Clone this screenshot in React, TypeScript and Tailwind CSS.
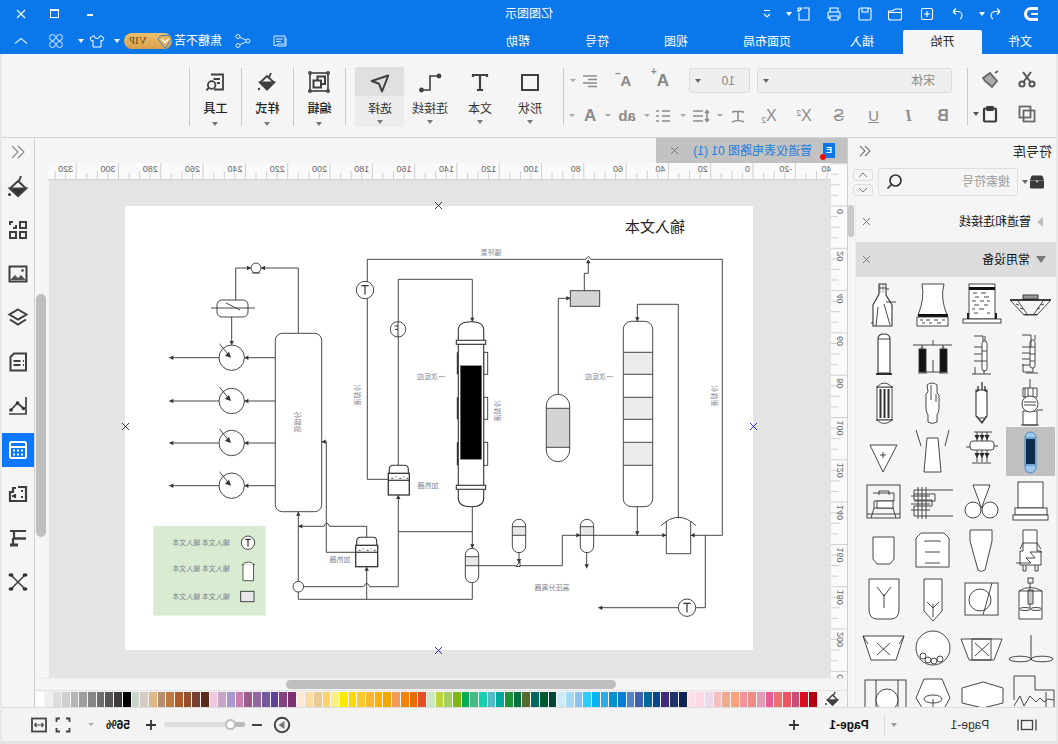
import React from "react";

type P = { w?: number; h?: number; className?: string; children?: React.ReactNode; stroke?: string; sw?: number };

// Icons are drawn as they look in the picture; the mirror group undoes the page mirror.
const Mi = ({ w = 24, h = 24, className, children, stroke = "#3f3f3f", sw = 2 }: P) => (
  <svg width={w} height={h} viewBox={`0 0 ${w} ${h}`} className={className} fill="none" stroke={stroke} strokeWidth={sw}>
    <g transform={`matrix(-1 0 0 1 ${w} 0)`}>{children}</g>
  </svg>
);

const Caret = ({ c = "border-t-[#777]" }: { c?: string }) => (
  <div className={`w-0 h-0 border-x-[3px] border-t-[4px] border-x-transparent ${c}`} />
);
const CaretW = () => <div className="w-0 h-0 border-x-[3px] border-t-[4px] border-x-transparent border-t-white" />;
const CaretG = () => <div className="w-0 h-0 border-x-[3px] border-t-[3px] border-x-transparent border-t-[#aaa]" />;

const W = ({ children, w = 16 }: { children: React.ReactNode; w?: number }) => (
  <Mi w={w} h={16} stroke="#fff" sw={1.1}>{children}</Mi>
);

function TitleBar() {
  return (
    <div className="flex items-center h-[27px] bg-[#0a78ea] text-white">
      <div className="w-[52px] flex justify-center">
        <Mi w={18} h={18} stroke="#fff" sw={3}>
          <path d="M15 3.5H8a5.5 5.5 0 0 0 0 11h7" />
          <path d="M8 9h7" strokeWidth={2} />
        </Mi>
      </div>
      <div className="w-[20px] flex justify-center">
        <W><path d="M12 5.5l-3-3M12 5.5l-3 3M12 5.5H7a4 4 0 0 0-4 4v0a4 4 0 0 0 2 3.5" /></W>
      </div>
      <div className="w-[8px] flex justify-center"><CaretW /></div>
      <div className="w-[30px] ml-[6px] flex justify-center">
        <W><path d="M4 5.5l3-3M4 5.5l3 3M4 5.5h5a4 4 0 0 1 4 4v0a4 4 0 0 1-2 3.5" /></W>
      </div>
      <div className="w-[30px] flex justify-center">
        <W><rect x="2.5" y="2.5" width="11" height="11" rx="1.5" /><path d="M8 5v6M5 8h6" /></W>
      </div>
      <div className="w-[30px] ml-[2px] flex justify-center">
        <W><path d="M1.5 5v7a2 2 0 0 0 2 2h9a2 2 0 0 0 2-2V3h-6l-3 2zM1.5 6.5h13" /></W>
      </div>
      <div className="w-[30px] flex justify-center">
        <W><rect x="2" y="2" width="12" height="12" rx="1.5" /><path d="M5 2v4h6V2" /></W>
      </div>
      <div className="w-[30px] ml-[1px] flex justify-center">
        <W><path d="M4 6V2h8v4M4 12H2V7a1 1 0 0 1 1-1h10a1 1 0 0 1 1 1v5h-2M4 10h8v4H4z" /></W>
      </div>
      <div className="w-[22px] ml-[4px] flex justify-center">
        <W><path d="M7 2h6v12H3V7M2 6l4-4M2 2v4M2 2h4" /></W>
      </div>
      <div className="w-[8px] flex justify-center"><CaretW /></div>
      <div className="w-[20px] ml-[8px] flex justify-center">
        <W><path d="M5 4.5h6M5 8l3 3 3-3" /></W>
      </div>
      <div className="w-[100px] ml-[178px] text-center text-[12px]">亿图图示</div>
      <div className="flex-1" />
      <div className="w-[36px] flex justify-center">
        <div className="w-[6px] h-[2px] bg-white mt-[3px]" />
      </div>
      <div className="w-[34px] flex justify-center">
        <div className="w-[9px] h-[9px] border border-white border-t-2" />
      </div>
      <div className="w-[34px] flex justify-center">
        <W><path d="M4 4l8 8M12 4l-8 8" /></W>
      </div>
      <div className="w-[4px]" />
    </div>
  );
}

const TABS: [string, string, boolean][] = [
  ["文件", "w-[76px]", false],
  ["开始", "w-[79px]", true],
  ["插入", "w-[82px]", false],
  ["页面布局", "w-[108px]", false],
  ["视图", "w-[74px]", false],
  ["符号", "w-[84px]", false],
  ["帮助", "w-[74px]", false],
];

function TabBar() {
  return (
    <div className="flex items-end h-[27px] bg-[#0a78ea]">
      {TABS.map(([t, w, a]) => (
        <div
          key={t}
          className={`${w} h-[24px] flex items-center justify-center text-[12px] ${a ? "bg-[#f5f5f5] text-[#222] rounded-t-[2px]" : "text-white"}`}
        >
          {t}
        </div>
      ))}
      <div className="flex-1" />
      <div className="h-[27px] flex items-center mr-[11px]">
        <div className="w-[20px] flex justify-center">
          <Mi w={16} h={16} stroke="#dcebff" sw={1}><path d="M2 3h11v8H6l-2 1.5H2zM4 6h7M4 8.5h5M14 5v8H5" /></Mi>
        </div>
        <div className="w-[20px] ml-[17px] flex justify-center">
          <Mi w={16} h={16} stroke="#dcebff" sw={1}><circle cx="3" cy="3.5" r="2" /><circle cx="3" cy="12.5" r="2" /><circle cx="13" cy="8" r="2" /><path d="M5 4.5l6 2.5M5 11.5l6-2.5" /></Mi>
        </div>
        <div className="w-[48px] ml-[11px] text-white text-[12px] text-center leading-none whitespace-nowrap">焦糖不苦</div>
        <div className="relative w-[48px] h-[16px] ml-[2px] rounded-full bg-gradient-to-b from-[#ecc06c] to-[#d99f4c] flex items-center justify-end pr-[5px]">
          <span className="text-[11px] text-[#6b4a1e] font-['Liberation_Serif'] leading-none">VIP</span>
          <div className="absolute left-[-2px] top-[-1px] w-[18px] h-[18px] flex items-center justify-center">
            <Mi w={18} h={18} stroke="#0a78ea" sw={0.8}><path d="M2 7l3-3.500h8L16 7l-7 9z" fill="#e7b45c" /><path d="M5.500 7l3.500 3.500L12.500 7" stroke="#fff" strokeWidth="1.400" /></Mi>
          </div>
        </div>
        <div className="w-[8px] ml-[3px] flex justify-center"><CaretW /></div>
        <div className="w-[20px] ml-[6px] flex justify-center">
          <Mi w={16} h={16} stroke="#fff" sw={1}><path d="M5 2.5L1 5l1.5 3L4 7.2V14h8V7.2l1.5.8L15 5l-4-2.5a3 3 0 0 1-6 0z" /></Mi>
        </div>
        <div className="w-[8px] ml-[2px] flex justify-center"><CaretW /></div>
        <div className="w-[20px] ml-[11px] flex justify-center">
          <Mi w={16} h={16} stroke="#dcebff" sw={1}><circle cx="4.5" cy="4.5" r="3" /><circle cx="11.5" cy="4.5" r="3" /><circle cx="4.5" cy="11.5" r="3" /><circle cx="11.5" cy="11.5" r="3" /></Mi>
        </div>
        <div className="w-[20px] ml-[15px] flex justify-center">
          <Mi w={16} h={16} stroke="#dcebff" sw={1.1}><path d="M2 10.5l6-5 6 5" /></Mi>
        </div>
      </div>
    </div>
  );
}

const Big = ({ icon, label, sel }: { icon: React.ReactNode; label: string; sel?: boolean }) => (
  <div className="w-[50px] h-[60px] mt-[13px] flex flex-col items-center rounded-[2px]">
    <div className={`w-[49px] h-[29px] flex items-center justify-center ${sel ? "bg-[#e0e0e0] rounded-t-[2px]" : ""}`}>{icon}</div>
    <div className={`w-[49px] h-[31px] flex flex-col items-center ${sel ? "bg-[#ececec] rounded-b-[2px]" : ""}`}>
      <div className="text-[12px] leading-[16px] mt-[5px] text-[#333]">{label}</div>
      <div className="mt-[3px]"><Caret /></div>
    </div>
  </div>
);

const Big2 = ({ icon, label }: { icon: React.ReactNode; label: string }) => (
  <div className="w-[52px] h-[58px] mt-[14px] flex flex-col items-center border-r border-[#c9c9c9]">
    <div className="h-[28px] flex items-center justify-center">{icon}</div>
    <div className="text-[12px] leading-[16px] mt-[5px] text-[#222] font-medium">{label}</div>
    <div className="mt-[5px]"><Caret /></div>
  </div>
);

const G = "#8c8c8c";
const GIc = ({ children, w = 18 }: { children: React.ReactNode; w?: number }) => (
  <Mi w={w} h={16} stroke={G} sw={1.6}>{children}</Mi>
);

function Ribbon() {
  return (
    <div className="flex h-[84px] bg-[#f5f5f5] border-b border-[#d4d4d4]">
      {/* clipboard */}
      <div className="w-[88px] flex">
        <div className="w-[54px] flex flex-col items-center pl-[4px] pt-[15px] gap-[15px]">
          <Mi w={20} h={20} stroke="#555" sw={2}>
            <circle cx="5" cy="15" r="2.6" /><circle cx="15" cy="15" r="2.6" /><path d="M6.5 13L14 3M13.5 13L6 3" />
          </Mi>
          <Mi w={20} h={20} stroke="#666" sw={1.8}>
            <rect x="2.5" y="2.5" width="11" height="11" /><rect x="6.5" y="6.5" width="11" height="11" />
          </Mi>
        </div>
        <div className="flex-1 flex flex-col items-start pl-[2px] pt-[15px] gap-[15px]">
          <Mi w={20} h={20} stroke="#666" sw={1.8}>
            <path d="M3 9l7-5 7 8-5 6-7-6z" fill="#aaa" /><path d="M15 4l3-2" />
          </Mi>
          <div className="flex items-center">
            <Mi w={20} h={20} stroke="#3a3a3a" sw={2.2}>
              <rect x="4" y="4.5" width="12" height="13" rx="1" /><path d="M7.5 3h5v3h-5z" fill="#3a3a3a" />
            </Mi>
            <div className="w-[1px]" />
            <Caret c="border-t-[#555]" />
          </div>
        </div>
      </div>
      <div className="w-px h-[57px] mt-[14px] bg-[#c9c9c9]" />
      {/* font */}
      <div className="w-[403px] flex flex-col pt-[14px]">
        <div className="flex items-center h-[25px]">
          <div className="ml-[15px] w-[195px] h-[25px] bg-[#efefef] border border-[#dcdcdc] rounded-[3px] flex items-center justify-between pl-[16px] pr-[5px]">
            <span className="text-[12px] text-[#8a8a8a]">宋体</span>
            <Caret c="border-t-[#666]" />
          </div>
          <div className="ml-[7px] w-[61px] h-[25px] bg-[#efefef] border border-[#dcdcdc] rounded-[3px] flex items-center justify-between pl-[14px] pr-[5px]">
            <span className="text-[12px] text-[#8a8a8a] font-['Liberation_Sans']">10</span>
            <Caret c="border-t-[#666]" />
          </div>
          <div className="w-[34px] ml-[12px] flex justify-center">
            <span className="text-[17px] font-bold text-[#888] font-['Liberation_Sans'] leading-none">A<sup className="text-[10px] align-[6px]">+</sup></span>
          </div>
          <div className="w-[34px] ml-[3px] flex justify-center">
            <span className="text-[15px] font-bold text-[#888] font-['Liberation_Sans'] leading-none">A<sup className="text-[10px] align-[4px]">−</sup></span>
          </div>
          <div className="w-[22px] ml-[5px] flex justify-center">
            <GIc><path d="M2 3h14M7 6.5h9M2 10h14M7 13.5h9" /></GIc>
          </div>
          <div className="ml-[3px]"><CaretG /></div>
        </div>
        <div className="flex items-center h-[25px] mt-[10px] text-[#8c8c8c] font-['Liberation_Sans']">
          <div className="w-[34px] ml-[7px] text-center text-[16px] font-bold leading-none">B</div>
          <div className="w-[35px] text-center text-[16px] font-bold italic font-['Liberation_Serif'] leading-none">I</div>
          <div className="w-[35px] text-center text-[15px] underline leading-none">U</div>
          <div className="w-[34px] text-center text-[16px] line-through leading-none">S</div>
          <div className="w-[36px] text-center text-[16px] leading-none">X<sup className="text-[9px]">2</sup></div>
          <div className="w-[34px] text-center text-[16px] leading-none">X<sub className="text-[9px]">2</sub></div>
          <div className="w-[28px] flex justify-center"><GIc><path d="M4 3.5h10M9 3.5v8M4 3v2M14 3v2M3 14q6-3 12 0" /></GIc></div>
          <div className="w-[8px] flex justify-center"><CaretG /></div>
          <div className="w-[30px] flex justify-center"><GIc w={20}><path d="M2 3h10M2 8h10M2 13h10M16 3v10M14 5l2-2.5L18 5M14 11l2 2.5 2-2.5" /></GIc></div>
          <div className="w-[6px] flex justify-center"><CaretG /></div>
          <div className="w-[28px] ml-[3px] flex justify-center"><GIc><path d="M2 3h3M8 3h8M2 8h3M8 8h8M2 13h3M8 13h8" /></GIc></div>
          <div className="w-[4px] flex justify-center"><CaretG /></div>
          <div className="w-[32px] ml-[2px] text-center text-[15px] font-bold leading-none">ab</div>
          <div className="w-[6px] flex justify-center"><CaretG /></div>
          <div className="w-[30px] text-center text-[17px] font-bold leading-none">A</div>
          <div className="w-[6px] flex justify-center"><CaretG /></div>
        </div>
      </div>
      <div className="w-px h-[57px] mt-[14px] bg-[#c9c9c9]" />
      <div className="w-[8px]" />
      <Big label="形状" icon={<Mi><rect x="4" y="5" width="16" height="15" /></Mi>} />
      <Big label="文本" icon={<Mi w={24} h={24} sw={2.2}><path d="M5 7V5h14v2M12 5v15M9 20h6" /></Mi>} />
      <Big label="连接线" icon={<Mi sw={1.6}><circle cx="3.5" cy="20" r="1.6" fill="#3f3f3f" /><circle cx="21" cy="6" r="1.6" fill="#3f3f3f" /><path d="M5 20h7V6h7" /></Mi>} />
      <Big sel label="选择" icon={<Mi sw={2}><path d="M3.7 11L20.3 5.5 14 21.5 11 13.7z" strokeLinejoin="round" /></Mi>} />
      <div className="w-[9px]" />
      <div className="w-px h-[57px] mt-[14px] bg-[#c9c9c9]" />
      <Big2 label="编辑" icon={
        <Mi sw={1.6}>
          <rect x="3" y="3" width="18" height="18" /><circle cx="3" cy="3" r="1.2" fill="#f5f5f5" /><circle cx="21" cy="3" r="1.2" fill="#f5f5f5" /><circle cx="3" cy="21" r="1.2" fill="#f5f5f5" /><circle cx="21" cy="21" r="1.2" fill="#f5f5f5" />
          <path d="M10.5 10V6.5h7.5V14h-4" strokeWidth="2" /><rect x="6.5" y="10.5" width="7.5" height="7" strokeWidth="2" />
        </Mi>} />
      <Big2 label="样式" icon={
        <Mi sw={1.8}>
          <path d="M12 6l7 6.5-7 7-7-7z" /><path d="M5 12.5h14l-7 7z" fill="#3f3f3f" /><path d="M14 7.5L16 3" /><circle cx="4" cy="19" r="1.2" fill="#3f3f3f" stroke="none" />
        </Mi>} />
      <Big2 label="工具" icon={
        <Mi sw={1.8}>
          <path d="M8 4.5h12v15H11" /><path d="M10.5 9h6.5M14 13h3" /><circle cx="8.7" cy="15" r="3.8" /><path d="M5.7 18l-2.4 2.4" />
        </Mi>} />
    </div>
  );
}

const PAL = [
  "#ffffff","#eeeeee","#dddddd","#cfcfcf","#b5b5b5","#9e9e9e","#868686","#6e6e6e","#555555","#3e3a3a","#000000",
  "#c9d4cb","#d5ccc6","#dfb888","#b88f6e","#be7a42","#ad5b2b","#954f2b","#773f30","#5c2c1b",
  "#efc8dd","#c9a5c7","#a998cf","#cb7fb0","#9c5b8d","#91679e","#74589f","#5f4195","#83417f","#7f2f74",
  "#fde9d3","#fbdca8","#ecca97","#fdd26b","#fdf083","#fee900","#fdd900","#fdc92d","#fdb72f","#fdb100","#f1a704","#f49c55","#f38300","#ed6b06","#e84e24",
  "#cfe6c5","#bdd53e","#a5ce63","#7eb80e","#06ad52","#45b97f","#19cfae","#54bac6","#00aa9e","#1f9139","#02723f","#546a2f",
  "#01695f","#005c30","#004435","#cdeaf6","#a4d9f3","#8bc3ec","#2fcbfd","#07b3f0","#2eabe6","#0091d0","#0a7cd1","#5484c4","#3e62ae","#04689f","#04478d","#412a7d","#21356a","#0f2454",
  "#fde0e7","#fdd8e7","#ecd8e9","#f5c0bd","#eeab94","#fca17a","#f3929a","#ef8d85","#e39bb7","#e95d95","#ee7070","#ee5563","#c74f77","#db0d20","#b30012",
];

function HRuler() {
  const ks = Array.from({ length: 19 }, (_, i) => i - 2);
  return (
    <svg width={783} height={17} className="block bg-[#fafafa] border-b border-[#d4d4d4] box-border">
      {ks.map((k) => {
        const x = 78 + 42.3 * k;
        return (
          <g key={k} stroke="#cfcfcf">
            <line x1={x} x2={x} y1={0} y2={16} />
            <line x1={x + 10.6} x2={x + 10.6} y1={10} y2={16} />
            <line x1={x + 21.1} x2={x + 21.1} y1={8} y2={16} />
            <line x1={x + 31.7} x2={x + 31.7} y1={10} y2={16} />
            <text x={x + 3} y={9} fontSize={9} fill="#666" stroke="none" fontFamily="Liberation Sans">{20 * k}</text>
          </g>
        );
      })}
    </svg>
  );
}

function VRuler() {
  const ks = Array.from({ length: 12 }, (_, i) => i);
  return (
    <svg width={16} height={515} className="block bg-[#fafafa] shrink-0">
      {[-1, ...ks].map((k) => {
        const y = 43 + 42.3 * k;
        return (
          <g key={k} stroke="#cfcfcf">
            <line x1={0} x2={16} y1={y} y2={y} />
            <line x1={9} x2={16} y1={y + 10.6} y2={y + 10.6} />
            <line x1={7} x2={16} y1={y + 21.1} y2={y + 21.1} />
            <line x1={9} x2={16} y1={y + 31.7} y2={y + 31.7} />
            {k >= 0 && (
              <text x={4} y={y + 3} fontSize={9} fill="#666" stroke="none" fontFamily="Liberation Sans" transform={`rotate(90 4 ${y + 3})`}>
                {k === 11 ? 0 : 20 * k}
              </text>
            )}
          </g>
        );
      })}
    </svg>
  );
}

const Ar = ({ x, y, d }: { x: number; y: number; d: "l" | "r" | "u" | "d" }) => {
  const s = 2.2, t = 4;
  const p =
    d === "l" ? `${x},${y} ${x + t},${y - s} ${x + t},${y + s}` :
    d === "r" ? `${x},${y} ${x - t},${y - s} ${x - t},${y + s}` :
    d === "u" ? `${x},${y} ${x - s},${y + t} ${x + s},${y + t}` :
    `${x},${y} ${x - s},${y - t} ${x + s},${y - t}`;
  return <polygon points={p} fill="#333" stroke="none" />;
};

const Lb = ({ x, y, t, v, s = 7 }: { x: number; y: number; t: string; v?: boolean; s?: number }) => (
  <text
    x={878 - x}
    y={y}
    fontSize={s}
    fill="#7d8290"
    textAnchor="middle"
    dominantBaseline="middle"
    fontFamily="Noto Sans CJK SC"
    transform={v ? `rotate(90 ${878 - x} ${y})` : undefined}
  >
    {t}
  </text>
);

const Tank = ({ x, y, w, h }: { x: number; y: number; w: number; h: number }) => (
  <g>
    <path d={`M${x + 1} ${y + 8}V${y + 4}Q${x + 1} ${y} ${x + 5} ${y}H${x + w - 5}Q${x + w - 1} ${y} ${x + w - 1} ${y + 4}V${y + 8}`} fill="#fff" strokeWidth={1.1} />
    <rect x={x} y={y + 8} width={w} height={h - 8} fill="#fff" strokeWidth={1.3} />
    <line x1={x} x2={x + w} y1={y + 15} y2={y + 15} strokeWidth={1.2} />
    <path d={`M${x + 3} ${y + 13}h2M${x + 7} ${y + 11.5}h1M${x + 11} ${y + 13}h2M${x + 15} ${y + 11.5}h1M${x + 18} ${y + 13}h2`} />
  </g>
);

const Ves = ({ x, y, w, h, a, b }: { x: number; y: number; w: number; h: number; a: number; b: number }) => (
  <g>
    <rect x={x} y={a} width={w} height={b - a} fill="#e8e8e8" stroke="none" />
    <rect x={x} y={y} width={w} height={h} rx={w / 2} />
    <path d={`M${x} ${a}h${w}M${x} ${b}h${w}`} />
  </g>
);

const TC = ({ x, y, r = 8.7 }: { x: number; y: number; r?: number }) => (
  <g>
    <circle cx={x} cy={y} r={r} fill="#fff" />
    <path d={`M${x - r * 0.42} ${y - r * 0.5}h${r * 0.84}M${x} ${y - r * 0.5}v${r * 1.05}`} strokeWidth={1.2} />
  </g>
);

function Diagram() {
  const cy = [357.7, 401, 443, 485.7];
  return (
    <svg viewBox="125 206 628 444" width={628} height={444} className="block">
      <g transform="matrix(-1 0 0 1 878 0)" fill="none" stroke="#333" strokeWidth={0.9}>
        {/* top left */}
        <path d="M235.7 300V268H251M261 268H298.3V333.3" />
        <circle cx={256} cy={268} r={5} fill="#fff" />
        <path d="M252 273h8" />
        <Ar x={251} y={268} d="r" /><Ar x={261} y={268} d="l" />
        <rect x={217} y={300} width={31} height={17} rx={5} fill="#fff" />
        <path d="M211 308h44M226 303l14 7M231.7 317V345" />
        <Ar x={231.7} y={345} d="d" />
        {cy.map((y) => (
          <g key={y}>
            <circle cx={231.7} cy={y} r={12.7} fill="#fff" />
            <path d={`M169.3 ${y}H219M244.4 ${y}H275.3M219.5 ${y - 14}L230 ${y - 1}`} />
            <Ar x={169.3} y={y} d="l" /><Ar x={244.4} y={y} d="l" />
            <polygon points={`${231},${y} ${225},${y - 2} ${229},${y - 6}`} fill="#333" stroke="none" />
          </g>
        ))}
        <rect x={275.3} y={333.3} width={46.4} height={178.4} rx={7} fill="#fff" />
        {/* left lower */}
        <path d="M298.3 511.7V581.4M321.7 441.7H326.3V552.3H355.7" />
        <Ar x={321.7} y={441.7} d="l" />
        <Ar x={298.3} y={511.7} d="u" />
        <path d="M366.7 537.3V526.3H329.5Q326.7 520 324 526.3H298.3" />
        <Ar x={298.3} y={526.3} d="l" />
        <Tank x={355.7} y={537.3} w={22} h={29.4} />
        <circle cx={298.3} cy={586.7} r={5.3} fill="#fff" />
        <path d="M303.6 586.7H363.7Q366.7 580 369.7 586.7H398.3V495" />
        <Ar x={398.3} y={495} d="u" />
        <path d="M298.3 592V599.3H472.3V582.7M366.7 599.3V566.7" />
        <Ar x={366.7} y={566.7} d="u" />
        <Tank x={388.3} y={465.3} w={21} h={29.7} />
        <path d="M367.3 479.3V259.3H586Q588.3 254 590.6 259.3H722.3V535.3H690.7" />
        <Ar x={690.7} y={535.3} d="l" />
        <path d="M367.3 479.3H388.3M398.3 465.3V279.3H472.3V321.7" />
        <Ar x={472.3} y={321.7} d="d" />
        <TC x={365} y={290} />
        <circle cx={398} cy={329.3} r={7.7} fill="#fff" />
        <path d="M398 322v15M395 329.3h3M394.5 326h3.5" strokeWidth={1} />
        {/* reactor */}
        <path d="M458.3 340V330Q458.3 321.7 471 321.7Q483.7 321.7 483.7 330V340M458.3 489V498Q458.3 506.7 471 506.7Q483.7 506.7 483.7 498V489" fill="#fff" strokeWidth={1.1} />
        <rect x={483.7} y={352.3} width={4} height={22} fill="#fff" />
        <rect x={483.7} y={397.3} width={4} height={22} fill="#fff" />
        <rect x={483.7} y={442.3} width={4} height={23} fill="#fff" />
        <path d="M457.5 352.3v22M457.5 397.3v22M457.5 442.3v23" strokeWidth={1.4} />
        <rect x={458.3} y={344} width={25.4} height={142} fill="#fff" strokeWidth={1.1} />
        <rect x={456.3} y={340.3} width={29.4} height={4} fill="#fff" strokeWidth={1.1} />
        <rect x={456.3} y={485.3} width={29.4} height={4} fill="#fff" strokeWidth={1.1} />
        <rect x={460.3} y={365.7} width={21.4} height={93.6} fill="#000" stroke="#777" strokeWidth={0.5} />
        <path d="M472.3 506.7V548.3M398.3 531.7H472.3" />
        <Ar x={472.3} y={548.3} d="d" />
        <Ves x={465.3} y={548.3} w={13.4} h={34.4} a={556.7} b={565.7} />
        <path d="M478.7 565.7H562.3V535.3H580.3" />
        <Ar x={580.3} y={535.3} d="r" />
        <Ves x={512.3} y={519.3} w={13.4} h={33.4} a={526.7} b={535.3} />
        <path d="M519 552.7V563" />
        <Ar x={519} y={563} d="d" />
        <polygon points="516,566.5 520,561.5 520,566.5" fill="#fff" />
        <Ves x={580.3} y={519.3} w={13.4} h={33.4} a={526.7} b={535.3} />
        <path d="M586.7 552.7V568.3" />
        <Ar x={586.7} y={568.3} d="d" />
        {/* capsule */}
        <rect x={546.3} y={408.3} width={23.4} height={39} fill="#d4d4d4" stroke="none" />
        <rect x={546.3} y={394.3} width={23.4} height={67.4} rx={11.7} />
        <path d="M546.3 408.3h23.4M546.3 447.3h23.4" />
        <path d="M558.3 394.3V298.3H570.3" />
        <Ar x={570.3} y={298.3} d="r" />
        <rect x={570.3} y={290.7} width={29.4} height={15.6} fill="#d4d4d4" />
        <path d="M584.3 290.7V273.3H588.3V260" />
        <Ar x={588.3} y={259.3} d="u" />
        {/* right column */}
        <rect x={623.3} y={352.3} width={29.4} height={22} fill="#ebebeb" stroke="none" />
        <rect x={623.3} y={397.3} width={29.4} height={22} fill="#ebebeb" stroke="none" />
        <rect x={623.3} y={442.3} width={29.4} height={23} fill="#ebebeb" stroke="none" />
        <rect x={623.3} y={321.3} width={29.4} height={185.4} rx={8} />
        <path d="M623.3 352.3h29.4M623.3 374.3h29.4M623.3 397.3h29.4M623.3 419.3h29.4M623.3 442.3h29.4M623.3 465.3h29.4" />
        <path d="M637.3 321.3V304.3H678.3V518.3" />
        <Ar x={637.3} y={321.3} d="d" />
        <path d="M593.7 535.3H666.3M637.3 506.7V535.3" />
        <Ar x={637.3} y={535.3} d="d" /><Ar x={666.3} y={535.3} d="r" />
        <path d="M661 525.7Q678.5 509 696 525.7" />
        <path d="M666.3 521V553.7H690.7V521" />
        <path d="M705.3 535.3V607.7H695.7M678.3 607.7H598.3" />
        <Ar x={598.3} y={607.7} d="l" />
        <TC x={687} y={607.7} />
        {/* legend */}
        <rect x={153.3} y={526} width={112.4} height={89.7} fill="#d9ecd2" stroke="none" />
        <TC x={248} y={542.7} r={6.7} />
        <path d="M241.7 565Q248.3 559 255 565M243 564V580.7H253.5V564" strokeWidth={0.8} fill="#fff" />
        <rect x={240.7} y={591.3} width={13.3} height={10.4} fill="#e8e8e8" />
      </g>
      <Lb x={298} y={422} t="分馏塔" v />
      <Lb x={358} y={395} t="冷却液" v />
      <Lb x={498} y={411} t="冷却液" v />
      <Lb x={715} y={396} t="冷却液" v />
      <Lb x={431} y={377} t="一次反应" />
      <Lb x={599} y={377} t="一次反应" />
      <Lb x={428} y={485.7} t="加热器" />
      <Lb x={340} y={560} t="加热器" />
      <Lb x={491} y={253} t="循环泵" />
      <Lb x={552} y={587.7} t="高压分离器" />
      <Lb x={201} y={542.7} t="输入文本 输入文本" />
      <Lb x={201} y={569} t="输入文本 输入文本" />
      <Lb x={201} y={596.7} t="输入文本 输入文本" />
      <text x={878 - 655} y={232} fontSize={15} fill="#222" textAnchor="middle" fontFamily="Noto Sans CJK SC">输入文本</text>
    </svg>
  );
}

const Handle = ({ c, cls }: { c: string; cls: string }) => (
  <div className={`absolute w-[9px] h-[9px] ${cls}`}>
    <svg width={9} height={9} className="block" stroke={c} strokeWidth={0.9}><path d="M1 1l7 7M8 1L1 8" /></svg>
  </div>
);

const Sym = ({ children, sel }: { children: React.ReactNode; sel?: boolean }) => (
  <div className={`w-[49px] h-[49px] ${sel ? "bg-[#c0c0c0]" : ""}`}>
    <svg width={49} height={49} viewBox="0 0 49 49" className="block">
      <g transform="matrix(-1 0 0 1 49 0)" fill="none" stroke="#333" strokeWidth={0.9}>{children}</g>
    </svg>
  </div>
);

const SYMS: React.ReactNode[] = [
  // row 0
  <>
    <rect x="17" y="15" width="15" height="4" fill="#999" />
    <path d="M4 20H45" strokeWidth="1.6" stroke="#000" />
    <path d="M5 21L18 35H31L44 21M12 21L21 34M37 21L28 34M17 34.500H32" />
    <path d="M10 24l3 1M14 28l3 1M35 25l3-1M31 29l3-1" />
  </>,
  <>
    <rect x="12" y="4" width="26" height="35" fill="#fff" />
    <rect x="12" y="7" width="26" height="3" fill="#111" stroke="none" />
    <path d="M16 13h4M24 13h5M18 17h4M27 17h5M15 21h4M23 21h4M30 21h3M17 25h5M27 25h4M15 29h3M22 29h5M30 33h3M17 33h4" />
    <rect x="6" y="39" width="38" height="4" fill="#fff" />
    <rect x="10" y="33" width="2" height="6" fill="#222" stroke="none" /><rect x="38" y="33" width="2" height="6" fill="#222" stroke="none" />
  </>,
  <>
    <path d="M14 4H36Q32 18 39 35H10Q17 18 14 4Z" fill="#fff" />
    <rect x="10" y="34" width="30" height="3" fill="#111" stroke="none" />
    <rect x="9" y="37" width="31" height="9" fill="#fff" />
    <path d="M12 40h3M18 40h4M26 40h4M34 40h3M14 43h3M21 43h3M29 43h4" />
  </>,
  <>
    <path d="M20 4V14L14 25V46H33V25L27 15V4Z" fill="#fff" strokeWidth="1.100" />
    <path d="M20 8H27M27 9h3M27 22h10M19 27L17 46M25 24L31 45M14 43h-2" />
    <path d="M21 4V13M24 4V13" strokeWidth=".5" />
  </>,
  // row 1
  <>
    <rect x="24" y="11" width="5" height="28" rx="2.500" fill="#fff" />
    <path d="M24 18h5M24 25h5M24 32h5M27 39V43H17V35M29 6V11M16 6H25V18M16 18H24M16 24H24M16 30H24M16 36H24M20 44h12" />
  </>,
  <>
    <rect x="25" y="12" width="5" height="30" rx="2.500" fill="#fff" />
    <path d="M25 22h5M25 32h5M28 7V12M17 7H26V12M17 18H25M17 25H25M17 32H25M15 45H34M18 38V45M27 41v4" />
  </>,
  <>
    <rect x="11" y="20" width="7" height="23" fill="#111" /><rect x="32" y="20" width="7" height="23" fill="#111" />
    <path d="M5 16H44M14 16v4M35 16v4M14 43H36M25 11v5M25 31v12M10 44h9M31 44h9" />
    <circle cx="14" cy="19" r="1" fill="#fff" /><circle cx="35" cy="19" r="1" fill="#fff" />
  </>,
  <>
    <path d="M19 44V10Q19 5 25 5Q31 5 31 10V44Z" fill="#fff" strokeWidth="1.100" />
    <path d="M19 10H31" />
    <rect x="17" y="44" width="16" height="2" fill="#333" stroke="none" />
  </>,
  // row 2
  <>
    <path d="M24 1V10M17 10H31V19H17ZM17 33H31V47H17ZM15 47H33" fill="#fff" />
    <path d="M19 10V19M22 10V19M27 10V19" />
    <circle cx="24" cy="26" r="8" fill="#fff" /><path d="M18 24h12M18 27h12M31 32h6" />
  </>,
  <>
    <path d="M19 12H30V38L25 45L19 38Z" fill="#fff" strokeWidth="1.100" />
    <path d="M25 4V12M21 8V13M28 8V13M19 14L22 12M30 14L27 12" strokeWidth="1.300" />
    <path d="M20 38L25 44L29 38M22 40h5" />
  </>,
  <>
    <path d="M19 7Q24 3 29 7V15L31 17V30Q31 34 29 37V44Q24 47 20 44V37Q18 34 18 30V16L20 14Z" fill="#fff" />
    <path d="M23 7V22M28 16V24" />
  </>,
  <>
    <rect x="18" y="9" width="15" height="33" fill="#fff" />
    <path d="M18 9Q25 1 33 9M18 42Q25 49 33 42M17 9H34M17 42H34" fill="#fff" />
    <rect x="20.500" y="11" width="2" height="29" fill="#333" stroke="none" /><rect x="24.500" y="11" width="2" height="29" fill="#333" stroke="none" /><rect x="28.500" y="11" width="2" height="29" fill="#333" stroke="none" />
  </>,
  // row 3
  <>
    <rect x="19" y="5" width="11" height="41" rx="5.500" fill="#9cc9ec" stroke="#3f7fb8" />
    <rect x="20" y="12" width="9" height="25" fill="#0c2d4d" stroke="none" />
    <path d="M19 11H30M19 38H30" stroke="#3f7fb8" />
  </>,
  <>
    <rect x="13" y="14" width="24" height="9" rx="3" fill="#fff" />
    <path d="M9 20H13M37 19H41M17 5H35M15 36H34M20 5V14M25 5V14M30 5V14M20 23V35M25 23V35M30 23V35" />
    <path d="M18 8l2 4 2-4M23 8l2 4 2-4M28 8l2 4 2-4M18 26l2 4 2-4M23 26l2 4 2-4M28 26l2 4 2-4" fill="#222" strokeWidth="1.200" />
  </>,
  <>
    <path d="M19 11H30L33 45H16Z" fill="#fff" />
    <path d="M8 3L13 19M41 3L37 19" />
  </>,
  <>
    <path d="M11 18H38L24 45Z" fill="#fff" />
    <path d="M24 25v6M21 28h6" />
  </>,
  // row 4
  <>
    <rect x="12" y="6" width="25" height="26" fill="#fff" />
    <rect x="9" y="32" width="32" height="7" fill="#fff" />
    <rect x="7" y="39" width="35" height="5" fill="#fff" />
  </>,
  <>
    <path d="M16 9H33L24.500 32Z" fill="#fff" />
    <circle cx="16" cy="34" r="8" fill="#fff" /><circle cx="33" cy="34" r="8" fill="#fff" />
  </>,
  <>
    <path d="M45 14H6V24H24V30H6V40H45" />
    <path d="M6 18H27V25H6M3 20H22M3 28H22M3 34H22M10 11V43M14 11V43M18 11V43" />
  </>,
  <>
    <rect x="8" y="9" width="33" height="33" />
    <path d="M14 17H35V25H15V32H34M20 19V15H30V19M12 42L15 32M37 42L34 32" />
    <rect x="18" y="25" width="16" height="7" fill="#fff" />
    <path d="M8 38H41" />
  </>,
  // row 5
  <>
    <path d="M17 26V5H31V26H35V40H14V26Z" fill="#fff" />
    <path d="M17 18H31M17 18L14 24M31 18L35 24M10 38H25L20 33H29L24 27H36M17 40V46H20V40M29 40V46H32V40" />
  </>,
  <>
    <path d="M13 5H35V16L28 45Q24 48 21 45L13 16Z" fill="#fff" />
  </>,
  <>
    <path d="M13 8H36L41 13V42H8V13Z" fill="#fff" />
    <path d="M17 16L32 16M17 16v1M32 16v1M17 27H32M17 38H32" />
  </>,
  <>
    <path d="M14 12H35V34L31 39H18L14 34Z" fill="#fff" />
  </>,
  // row 6
  <>
    <rect x="22" y="4" width="5" height="5" />
    <path d="M13 17Q24 10 36 17V45H13ZM24 9V35" fill="#fff" />
    <path d="M13 17H36M22 16h5V30h-5z" fill="#ccc" />
    <ellipse cx="19" cy="35" rx="5.500" ry="1.500" fill="#fff" /><ellipse cx="30" cy="35" rx="5.500" ry="1.500" fill="#fff" />
  </>,
  <>
    <rect x="8" y="9" width="33" height="32" fill="#fff" />
    <circle cx="23" cy="26" r="11" /><path d="M35 9L26 41" />
  </>,
  <>
    <path d="M16 5H34V37L25 47L16 37Z" fill="#fff" />
    <path d="M25 43V30M19 28L25 34L31 28" />
  </>,
  <>
    <path d="M10 5H40V35Q40 45 32 45H18Q10 45 10 35Z" fill="#fff" />
    <path d="M25 34V20M18 13L25 22L32 13" />
  </>,
  // row 7
  <>
    <path d="M25 12V37" />
    <ellipse cx="14" cy="36" rx="11" ry="2.800" /><ellipse cx="36" cy="36" rx="11" ry="2.800" />
  </>,
  <>
    <path d="M4 16H45L37 37H12Z" fill="#fff" />
    <rect x="15" y="16" width="19" height="21" />
    <path d="M18 20L32 33M32 20L18 33" />
  </>,
  <>
    <circle cx="25" cy="25" r="17" fill="#fff" />
    <circle cx="15" cy="33" r="3" fill="#fff" /><circle cx="20" cy="37" r="3" fill="#fff" /><circle cx="26" cy="38" r="3" fill="#fff" /><circle cx="32" cy="36" r="3" fill="#fff" />
  </>,
  <>
    <path d="M4 13H45L37 37H12Z" fill="#fff" />
    <path d="M4 13L9 21M45 13L40 21M18 20L31 32M31 20L18 32" />
  </>,
  // row 8
  <>
    <path d="M8 28V4H29V18H48V42H8M8 34L14 24L18 34L24 24L30 30L34 26L38 30L42 27L48 28" />
    <path d="M40 20V42" />
  </>,
  <>
    <path d="M5 16L26 10L46 16V31L26 36L5 31Z" fill="#fff" />
  </>,
  <>
    <path d="M16 7H34L42 26L33 42H18L8 26Z" fill="#fff" />
    <ellipse cx="25" cy="27" rx="9" ry="4" /><path d="M25 27V42" />
  </>,
  <>
    <rect x="6" y="8" width="41" height="40" />
    <path d="M17 8V48M39 8V48" /><circle cx="28" cy="28" r="11" fill="#fff" />
  </>,
];

function Library() {
  return (
    <div className="w-[208px] shrink-0 flex flex-col overflow-hidden bg-[#f5f5f5]">
      <div className="h-[26px] flex items-center justify-between pl-[4px] pr-[10px] shrink-0">
        <span className="text-[13px] text-[#222] leading-none">符号库</span>
        <Mi w={14} h={14} stroke="#777" sw={1.1}><path d="M2 2l5 5-5 5M7 2l5 5-5 5" /></Mi>
      </div>
      <div className="h-[28px] mt-[4px] flex items-center shrink-0">
        <div className="w-[36px] flex items-center justify-end pr-[2px] gap-[1px]">
          <Mi w={16} h={16} stroke="#3a3a3a" sw={1}>
            <path d="M3 2h10l1.500 4h-13z" fill="#3a3a3a" /><path d="M1.500 7h5l1 2h1l1-2h5v7h-13z" fill="#3a3a3a" />
          </Mi>
          <Caret c="border-t-[#666]" />
        </div>
        <div className="w-[140px] h-[28px] ml-[2px] border border-[#dedede] rounded-[3px] flex items-center justify-between pl-[7px] pr-[6px]">
          <span className="text-[12px] text-[#9a9a9a] leading-none">搜索符号</span>
          <Mi w={18} h={18} stroke="#333" sw={1.700}>
            <circle cx="10.500" cy="7.500" r="5.500" /><path d="M6.500 11.500L2.500 15.500" />
          </Mi>
        </div>
        <div className="w-[20px] ml-[5px] flex flex-col gap-[3px]">
          <div className="h-[12px] border border-[#dedede] rounded-[3px] flex items-center justify-center">
            <svg width="10" height="6" fill="none" stroke="#777"><path d="M1 5l4-4 4 4" /></svg>
          </div>
          <div className="h-[12px] border border-[#dedede] rounded-[3px] flex items-center justify-center">
            <svg width="10" height="6" fill="none" stroke="#777"><path d="M1 1l4 4 4-4" /></svg>
          </div>
        </div>
      </div>
      <div className="flex flex-1 mt-[5px] min-h-0">
        <div className="w-[200px] flex flex-col overflow-hidden">
          <div className="h-[41px] shrink-0 flex items-center pl-[13px] pr-[6px] justify-between">
            <div className="flex items-center gap-[6px]">
              <div className="w-0 h-0 border-y-[5px] border-l-[6px] border-y-transparent border-l-[#bdbdbd]" />
              <span className="text-[12px] text-[#111] leading-none">管道和连接线</span>
            </div>
            <svg width="9" height="9" stroke="#777"><path d="M1 1l7 7M8 1L1 8" /></svg>
          </div>
          <div className="h-[35px] shrink-0 bg-[#dddddd] flex items-center pl-[10px] pr-[6px] justify-between">
            <div className="flex items-center gap-[6px]">
              <div className="w-0 h-0 border-x-[5px] border-t-[7px] border-x-transparent border-t-[#777]" />
              <span className="text-[12px] text-[#111] leading-none">常用设备</span>
            </div>
            <svg width="9" height="9" stroke="#777"><path d="M1 1l7 7M8 1L1 8" /></svg>
          </div>
          <div className="grid grid-cols-[repeat(4,49px)] auto-rows-[49px] pl-[1px] pt-[3px]">
            {SYMS.map((s, i) => (
              <Sym key={i} sel={i === 12}>{s}</Sym>
            ))}
          </div>
        </div>
        <div className="w-[8px] flex justify-center pt-[4px] border-l border-[#ececec]">
          <div className="w-[6px] h-[32px] rounded-full bg-[#c9c9c9]" />
        </div>
      </div>
    </div>
  );
}

function Center() {
  return (
    <div className="w-[813px] shrink-0 flex flex-col border-l border-[#cfcfcf]">
      <div className="h-[25px] flex bg-[#f5f5f5] shrink-0">
        <div className="w-[191px] h-[25px] bg-[#c2c2c2] flex items-center">
          <div className="relative w-[12px] h-[15px] ml-[12px] bg-[#0a78ea] flex items-center justify-center">
            <span className="text-[9px] text-white font-bold font-['Liberation_Sans'] leading-none">E</span>
            <div className="absolute right-[-3px] bottom-[-2px] w-[6px] h-[6px] rounded-full bg-[#ee0a0a]" />
          </div>
          <span className="ml-[11px] text-[12px] text-[#1a7fe0] leading-none whitespace-nowrap">管道仪表电路图 01 (1)</span>
          <svg width="9" height="9" stroke="#777" className="ml-[14px]"><path d="M1 1l7 7M8 1L1 8" /></svg>
        </div>
      </div>
      <div className="flex h-[515px] shrink-0">
        <VRuler />
        <div className="w-[783px] flex flex-col">
          <HRuler />
          <div className="flex-1 bg-[#e4e4e4] overflow-hidden border-r border-[#f5f5f5]">
            <div className="relative ml-[78px] mt-[26px] w-[628px] h-[444px] bg-white">
              <Diagram />
              <Handle c="#222" cls="left-[310px] top-[-5px]" />
              <Handle c="#222" cls="left-[623px] top-[216px]" />
              <Handle c="#1414e0" cls="left-[-5px] top-[216px]" />
              <Handle c="#1414e0" cls="left-[310px] top-[440px]" />
            </div>
          </div>
        </div>
        <div className="w-[13px] bg-[#f5f5f5] pt-[131px] px-[1px] border-r border-[#f5f5f5]">
          <div className="w-[10px] h-[243px] ml-[1px] rounded-full bg-[#bfbfbf]" />
        </div>
      </div>
      <div className="h-[12px] bg-[#f5f5f5] flex shrink-0 border-t border-[#ededed]">
        <div className="w-[17px]" />
        <div className="w-[783px] pl-[214px] pt-[1px]">
          <div className="w-[330px] h-[9px] rounded-full bg-[#bfbfbf]" />
        </div>
      </div>
      <div className="h-[17px] flex items-center bg-[#f5f5f5] shrink-0 border-t border-[#e4e4e4]">
        <div className="w-[30px] flex justify-center">
          <Mi w={16} h={16} sw={1.400}>
            <path d="M8.500 4l5 5-5 5-5-5z" /><path d="M3.500 9h10l-5 5z" fill="#3f3f3f" /><path d="M9.500 4.500L11 1" /><circle cx="2" cy="13" r="1" fill="#3f3f3f" stroke="none" />
          </Mi>
        </div>
        <div className="w-[781px] h-[15px] flex flex-row-reverse gap-px">
          {PAL.map((c, i) => (
            <div key={i} className="flex-1 h-full" style={{ backgroundColor: c }} />
          ))}
        </div>
      </div>
    </div>
  );
}

const Tool = ({ children, active }: { children: React.ReactNode; active?: boolean }) => (
  <div className={`h-[34px] mb-[10px] flex items-center justify-center ${active ? "bg-[#0a78ff]" : ""}`}>{children}</div>
);

function LeftBar() {
  return (
    <div className="w-[33px] shrink-0 bg-[#f5f5f5] border-l border-[#cfcfcf] flex flex-col">
      <div className="h-[28px] flex items-center justify-center">
        <Mi w={16} h={16} stroke="#888" sw={1.100}><path d="M2 2l6 6-6 6M8 2l6 6-6 6" /></Mi>
      </div>
      <div className="h-[3px]" />
      <Tool>
        <Mi sw={2}>
          <path d="M12 7l8 7.500-8 7.500-8-7.500z" /><path d="M4 14.500h16l-8 7.500z" fill="#333" /><path d="M13 7l2-5" /><circle cx="3.500" cy="20.500" r="1.500" fill="#333" stroke="none" />
        </Mi>
      </Tool>
      <Tool>
        <Mi sw={2}>
          <rect x="14" y="4" width="6" height="6" /><rect x="4" y="14" width="6" height="6" /><rect x="14" y="14" width="6" height="6" />
          <path d="M4 7V4h3M10 7v3H7" />
        </Mi>
      </Tool>
      <Tool>
        <Mi sw={2}>
          <rect x="3.500" y="4.500" width="17" height="15" /><path d="M4 18l5-5 3 3 3-3 5 5z" fill="#555" stroke="none" /><circle cx="16.500" cy="8.500" r="1.300" fill="#333" stroke="none" />
        </Mi>
      </Tool>
      <Tool>
        <Mi sw={2}>
          <path d="M12 3.500l8.500 5-8.500 5-8.500-5z" /><path d="M4 13.500l8 5 8-5" />
        </Mi>
      </Tool>
      <Tool>
        <Mi sw={2}>
          <path d="M8 3.500h12v17H4.500V7zM7.500 11h7M7.500 15h7M17 11h1M17 15h1" />
        </Mi>
      </Tool>
      <Tool>
        <Mi sw={1.700}>
          <path d="M20 3v17H3" /><path d="M5 16l6.500-7 6 5.500" /><circle cx="5" cy="16" r="1.800" fill="#333" stroke="none" /><circle cx="11.500" cy="9" r="1.800" fill="#333" stroke="none" /><circle cx="17.500" cy="14.500" r="1.800" fill="#333" stroke="none" />
        </Mi>
      </Tool>
      <Tool active>
        <Mi stroke="#fff" sw={2}>
          <rect x="4" y="4" width="16" height="16" rx="1.500" /><path d="M5 9h14" />
          <path d="M7 12.500h2M11 12.500h2M15 12.500h2M7 16.500h2M11 16.500h2M15 16.500h2" />
        </Mi>
      </Tool>
      <Tool>
        <Mi sw={1.800}>
          <path d="M12 5h8v14H4v-9h3V6h3M15 9h2M15 15h2M9 12v4M6 14h4" strokeWidth="2.200" />
        </Mi>
      </Tool>
      <Tool>
        <Mi sw={2.200}>
          <path d="M4 5h16M8 5v7" /><path d="M8 12.500h12" strokeWidth="2.500" /><path d="M4 19h8" strokeWidth="3" /><path d="M7 12v6" />
        </Mi>
      </Tool>
      <Tool>
        <Mi sw={1.500}>
          <path d="M5 5l14 14M19 5L5 19" />
          <ellipse cx="5" cy="5" rx="2.500" ry="1.800" fill="#333" stroke="none" /><ellipse cx="19" cy="5" rx="2.500" ry="1.800" fill="#333" stroke="none" /><ellipse cx="5" cy="19" rx="2.500" ry="1.800" fill="#333" stroke="none" /><ellipse cx="19" cy="19" rx="2.500" ry="1.800" fill="#333" stroke="none" />
        </Mi>
      </Tool>
    </div>
  );
}

function Status() {
  return (
    <div className="h-[34px] flex items-center bg-[#f3f3f3] border-t border-[#dcdcdc] font-['Liberation_Sans']">
      <div className="w-[58px] flex justify-center">
        <Mi w={22} h={16} stroke="#444" sw={1.300}><path d="M2 2.500v11M20 2.500v11" /><rect x="5.500" y="3.500" width="11" height="9" /></Mi>
      </div>
      <div className="w-[44px] ml-[6px] text-center text-[12px] text-[#333] leading-none">Page-1</div>
      <div className="w-[10px] ml-[51px]"><Caret c="border-t-[#999]" /></div>
      <div className="w-px h-[22px] ml-[2px] bg-[#dcdcdc]" />
      <div className="w-[46px] ml-[12px] text-center text-[12px] font-bold text-[#111] leading-none">Page-1</div>
      <div className="w-[16px] ml-[24px] flex justify-center">
        <Mi w={12} h={12} stroke="#333" sw={1.800}><path d="M6 1v10M1 6h10" /></Mi>
      </div>
      <div className="flex-1" />
      <div className="w-[20px] flex justify-center">
        <Mi w={18} h={18} stroke="#444" sw={2}><circle cx="9" cy="9" r="7.200" /><path d="M11.500 5v8L5.500 9z" fill="#777" stroke="none" /></Mi>
      </div>
      <div className="w-[14px] ml-[8px] flex justify-center"><div className="w-[10px] h-[2px] bg-[#444]" /></div>
      <div className="w-[81px] h-[5px] ml-[5px] rounded-full bg-[#dddddd] relative">
        <div className="absolute left-0 top-0 h-[5px] w-[14px] rounded-l-full bg-[#bbbbbb]" />
        <div className="absolute left-[9px] top-[-3px] w-[11px] h-[11px] rounded-full bg-white border-2 border-[#bdbdbd]" />
      </div>
      <div className="w-[14px] ml-[6px] flex justify-center">
        <Mi w={12} h={12} stroke="#333" sw={1.800}><path d="M6 1v10M1 6h10" /></Mi>
      </div>
      <div className="w-[28px] ml-[14px] text-[12px] font-bold text-[#111] leading-none">56%</div>
      <div className="w-[12px] ml-[8px]"><CaretG /></div>
      <div className="w-[16px] ml-[11px] flex justify-center">
        <Mi w={16} h={16} stroke="#444" sw={1.800}><path d="M1.500 5V1.500H5M11 1.500h3.500V5M14.500 11v3.500H11M5 14.500H1.500V11" /></Mi>
      </div>
      <div className="w-[16px] ml-[8px] mr-[29px] flex justify-center">
        <Mi w={16} h={16} stroke="#444" sw={1.800}><rect x="1" y="1.500" width="14" height="13" /><path d="M3.500 8h9M3.500 8l2-2M3.500 8l2 2M12.500 8l-2-2M12.500 8l-2 2" strokeWidth="1.200" /></Mi>
      </div>
    </div>
  );
}

export default function App() {
  return (
    <div className="w-[1058px] h-[744px] overflow-hidden flex flex-col -scale-x-100 bg-[#e4e4e4] text-[#222] font-['Liberation_Sans','Noto_Sans_CJK_SC',sans-serif]">
      <TitleBar />
      <TabBar />
      <div className="flex flex-col flex-1 border-x-2 border-[#e8e8e8] min-h-0">
        <Ribbon />
        <div className="flex h-[569px] shrink-0">
          <Library />
          <Center />
          <LeftBar />
        </div>
        <Status />
      </div>
      <div className="h-[3px] shrink-0" />
    </div>
  );
}
